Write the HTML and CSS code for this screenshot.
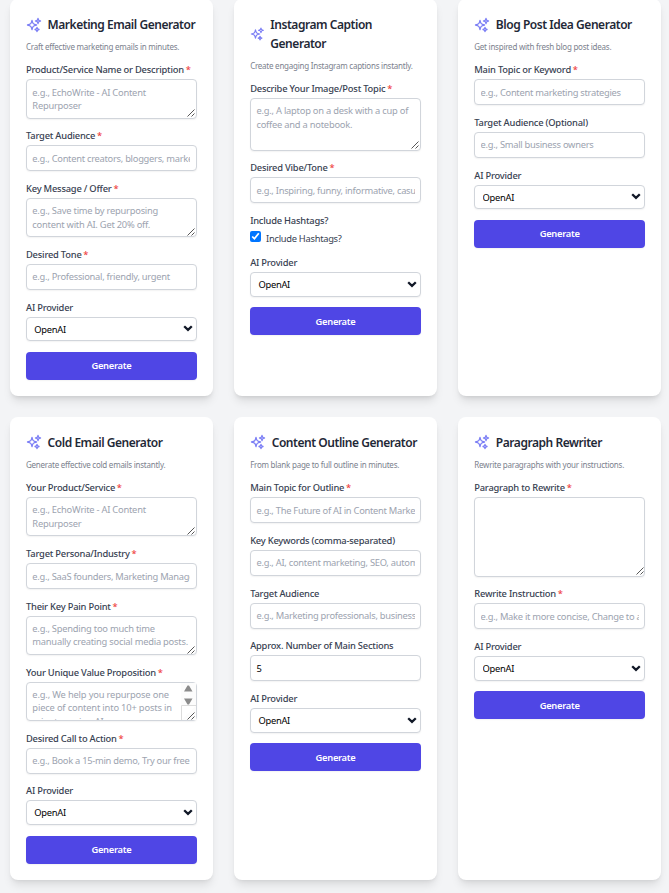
FILE: index.html
```html
<!DOCTYPE html>
<html lang="en">
<head>
<meta charset="utf-8">
<title>AI Content Generators</title>
<link rel="stylesheet" href="styles.css">
</head>
<body>
<svg class="defs" aria-hidden="true">
  <symbol id="sparkles" viewBox="0 0 24 24"><path d="M9.813 15.904 9 18.75l-.813-2.846a4.5 4.5 0 0 0-3.09-3.09L2.25 12l2.846-.813a4.5 4.5 0 0 0 3.09-3.09L9 5.25l.813 2.846a4.5 4.5 0 0 0 3.09 3.09L15.75 12l-2.846.813a4.5 4.5 0 0 0-3.09 3.09ZM18.259 8.715 18 9.75l-.259-1.035a3.375 3.375 0 0 0-2.455-2.456L14.25 6l1.036-.259a3.375 3.375 0 0 0 2.455-2.456L18 2.25l.259 1.035a3.375 3.375 0 0 0 2.456 2.456L21.75 6l-1.035.259a3.375 3.375 0 0 0-2.456 2.456ZM16.894 20.567 16.5 21.75l-.394-1.183a2.25 2.25 0 0 0-1.423-1.423L13.5 18.75l1.183-.394a2.25 2.25 0 0 0 1.423-1.423l.394-1.183.394 1.183a2.25 2.25 0 0 0 1.423 1.423l1.183.394-1.183.394a2.25 2.25 0 0 0-1.423 1.423Z"/></symbol>
  <symbol id="grip" viewBox="0 0 8 8"><path d="M.5 7.5l7-7M4.5 7.5l3-3"/></symbol>
  <symbol id="chevron" viewBox="0 0 10 7"><path d="M1.2 1.2L5 4.9l3.8-3.7"/></symbol>
</svg>
<main class="grid">
  <section class="card">
    <header class="head"><svg class="spark"><use href="#sparkles"/></svg><h2>Marketing Email Generator</h2></header>
    <p class="desc">Craft effective marketing emails in minutes.</p>
    <form class="form">
      <div class="field"><label>Product/Service Name or Description <b>*</b></label><div class="area"><textarea class="control" placeholder="e.g., EchoWrite - AI Content&#10;Repurposer"></textarea><svg class="grip"><use href="#grip"/></svg></div></div>
      <div class="field"><label>Target Audience <b>*</b></label><input class="control" placeholder="e.g., Content creators, bloggers, marketers"></div>
      <div class="field"><label>Key Message / Offer <b>*</b></label><div class="area"><textarea class="control" placeholder="e.g., Save time by repurposing&#10;content with AI. Get 20% off."></textarea><svg class="grip"><use href="#grip"/></svg></div></div>
      <div class="field"><label>Desired Tone <b>*</b></label><input class="control" placeholder="e.g., Professional, friendly, urgent"></div>
      <div class="field"><label>AI Provider</label><div class="area"><select class="control"><option>OpenAI</option></select><svg class="chevron"><use href="#chevron"/></svg></div></div>
      <button type="button">Generate</button>
    </form>
  </section>
  <section class="card">
    <header class="head"><svg class="spark small"><use href="#sparkles"/></svg><h2>Instagram Caption<br>Generator</h2></header>
    <p class="desc">Create engaging Instagram captions instantly.</p>
    <form class="form">
      <div class="field"><label>Describe Your Image/Post Topic <b>*</b></label><div class="area"><textarea class="control rows3" placeholder="e.g., A laptop on a desk with a cup of&#10;coffee and a notebook."></textarea><svg class="grip"><use href="#grip"/></svg></div></div>
      <div class="field"><label>Desired Vibe/Tone <b>*</b></label><input class="control" placeholder="e.g., Inspiring, funny, informative, casual"></div>
      <div class="field"><label>Include Hashtags?</label><div class="check"><input type="checkbox" checked><span>Include Hashtags?</span></div></div>
      <div class="field"><label>AI Provider</label><div class="area"><select class="control"><option>OpenAI</option></select><svg class="chevron"><use href="#chevron"/></svg></div></div>
      <button type="button">Generate</button>
    </form>
  </section>
  <section class="card">
    <header class="head"><svg class="spark"><use href="#sparkles"/></svg><h2>Blog Post Idea Generator</h2></header>
    <p class="desc">Get inspired with fresh blog post ideas.</p>
    <form class="form">
      <div class="field"><label>Main Topic or Keyword <b>*</b></label><input class="control" placeholder="e.g., Content marketing strategies"></div>
      <div class="field"><label>Target Audience (Optional)</label><input class="control" placeholder="e.g., Small business owners"></div>
      <div class="field"><label>AI Provider</label><div class="area"><select class="control"><option>OpenAI</option></select><svg class="chevron"><use href="#chevron"/></svg></div></div>
      <button type="button">Generate</button>
    </form>
  </section>
  <section class="card">
    <header class="head"><svg class="spark"><use href="#sparkles"/></svg><h2>Cold Email Generator</h2></header>
    <p class="desc">Generate effective cold emails instantly.</p>
    <form class="form">
      <div class="field"><label>Your Product/Service <b>*</b></label><div class="area"><textarea class="control" placeholder="e.g., EchoWrite - AI Content&#10;Repurposer"></textarea><svg class="grip"><use href="#grip"/></svg></div></div>
      <div class="field"><label>Target Persona/Industry <b>*</b></label><input class="control" placeholder="e.g., SaaS founders, Marketing Managers"></div>
      <div class="field"><label>Their Key Pain Point <b>*</b></label><div class="area"><textarea class="control" placeholder="e.g., Spending too much time&#10;manually creating social media posts."></textarea><svg class="grip"><use href="#grip"/></svg></div></div>
      <div class="field"><label>Your Unique Value Proposition <b>*</b></label><div class="area"><textarea class="control scrolls" placeholder="e.g., We help you repurpose one&#10;piece of content into 10+ posts in&#10;minutes using AI."></textarea><svg class="scrollbar" viewBox="0 0 15 37"><path class="track" d="M0 0h15v37H0z"/><path class="arrow" d="M3 8.5L6.5 2.5h1.5L11.5 8.5zM3 15.5h8.5L8 21.5h-1.5z"/><path class="corner" d="M.5 37V22.5H15"/></svg><svg class="grip"><use href="#grip"/></svg></div></div>
      <div class="field"><label>Desired Call to Action <b>*</b></label><input class="control" placeholder="e.g., Book a 15-min demo, Try our free trial"></div>
      <div class="field"><label>AI Provider</label><div class="area"><select class="control"><option>OpenAI</option></select><svg class="chevron"><use href="#chevron"/></svg></div></div>
      <button type="button">Generate</button>
    </form>
  </section>
  <section class="card">
    <header class="head"><svg class="spark"><use href="#sparkles"/></svg><h2>Content Outline Generator</h2></header>
    <p class="desc">From blank page to full outline in minutes.</p>
    <form class="form">
      <div class="field"><label>Main Topic for Outline <b>*</b></label><input class="control" placeholder="e.g., The Future of AI in Content Marketing"></div>
      <div class="field"><label>Key Keywords (comma-separated)</label><input class="control" placeholder="e.g., AI, content marketing, SEO, automation"></div>
      <div class="field"><label>Target Audience</label><input class="control" placeholder="e.g., Marketing professionals, business owners"></div>
      <div class="field"><label>Approx. Number of Main Sections</label><input class="control" value="5"></div>
      <div class="field"><label>AI Provider</label><div class="area"><select class="control"><option>OpenAI</option></select><svg class="chevron"><use href="#chevron"/></svg></div></div>
      <button type="button">Generate</button>
    </form>
  </section>
  <section class="card">
    <header class="head"><svg class="spark"><use href="#sparkles"/></svg><h2>Paragraph Rewriter</h2></header>
    <p class="desc">Rewrite paragraphs with your instructions.</p>
    <form class="form">
      <div class="field"><label>Paragraph to Rewrite <b>*</b></label><div class="area"><textarea class="control rows5"></textarea><svg class="grip"><use href="#grip"/></svg></div></div>
      <div class="field"><label>Rewrite Instruction <b>*</b></label><input class="control" placeholder="e.g., Make it more concise, Change to a formal tone"></div>
      <div class="field"><label>AI Provider</label><div class="area"><select class="control"><option>OpenAI</option></select><svg class="chevron"><use href="#chevron"/></svg></div></div>
      <button type="button">Generate</button>
    </form>
  </section>
</main>
</body>
</html>
```
FILE: styles.css
```css
* { box-sizing: border-box; }
html { overflow: hidden; }
body {
  margin: 0;
  height: 893px;
  overflow: hidden;
  background: #f3f4f6;
  font-family: "Noto Sans", "Open Sans", sans-serif;
  color: #1f2937;
}
.defs { position: absolute; width: 0; height: 0; }
.grid {
  display: grid;
  grid-template-columns: repeat(3, 202.8px);
  gap: 21.33px;
  margin: -0.8px 0 0 10px;
}
.card {
  padding: 16px;
  background: #fff;
  border-radius: 8px;
  box-shadow: 0 6.67px 10px -2px rgb(0 0 0 / .1), 0 2.67px 4px -2.67px rgb(0 0 0 / .1);
}
.head { display: flex; align-items: center; margin-bottom: 8px; }
.spark {
  flex: none;
  width: 16px;
  height: 16px;
  margin-right: 5.6px;
  fill: none;
  stroke: #7c7ff5;
  stroke-width: 2;
  stroke-linecap: round;
  stroke-linejoin: round;
}
.spark.small { width: 14.6px; }
h2 {
  margin: 1px 0 -1px;
  font-size: 12px;
  line-height: 18.67px;
  font-weight: 600;
  letter-spacing: -.46px;
  white-space: nowrap;
}
.desc {
  margin: 0 0 10.67px;
  font-size: 8px;
  line-height: 10.67px;
  color: #7b818d;
  letter-spacing: -.24px;
  white-space: nowrap;
}
.form { display: flex; flex-direction: column; gap: 10.67px; }
.field { display: flex; flex-direction: column; gap: 2.67px; }
label {
  font-size: 9.33px;
  line-height: 13.33px;
  font-weight: 500;
  color: #374151;
  letter-spacing: -.21px;
  white-space: nowrap;
}
label b { font-weight: 500; color: #ef4444; margin-left: -.4px; }
.area { position: relative; display: flex; }
.control {
  display: block;
  width: 100%;
  height: 26.05px;
  margin: 0;
  padding: 5.33px;
  border: 1px solid #d1d5db;
  border-radius: 4px;
  background: #fff;
  box-shadow: 0 1px 1.5px rgb(0 0 0 / .05);
  font: 400 9.33px/13.33px "Noto Sans", "Open Sans", sans-serif;
  letter-spacing: -.27px;
  color: #000;
  outline: 0;
}
.control::placeholder { color: #9ca3af; opacity: 1; }
textarea.control { height: 39.33px; padding-right: 0; resize: none; overflow: hidden; letter-spacing: -.23px; }
textarea.rows3 { height: 52.67px; }
textarea.rows5 { height: 79.6px; }
textarea.scrolls { padding-right: 16px; letter-spacing: -.17px; }
select.control { height: 24.67px; padding: 5px 7.3px 4.3px; appearance: none; }
.grip {
  position: absolute;
  right: 1.5px;
  bottom: 1.5px;
  width: 8px;
  height: 8px;
  stroke: #444;
  stroke-width: .9;
}
.chevron {
  position: absolute;
  right: 4px;
  top: 8.7px;
  width: 10px;
  height: 7px;
  fill: none;
  stroke: #111827;
  stroke-width: 2.3;
}
.scrollbar { position: absolute; right: 1px; top: 1px; width: 15px; height: 37px; }
.track { fill: #fcfcfc; }
.arrow { fill: #8b8b8b; }
.corner { fill: #fff; stroke: #dcdcdc; }
.check { display: flex; align-items: flex-start; height: 15.5px; }
.check input { width: 10.67px; height: 10.67px; margin: 1.4px 5.33px 0 0; accent-color: #0075ff; }
.check span { font-size: 9.33px; line-height: 13.33px; padding-top: 2px; letter-spacing: -.28px; color: #374151; }
button {
  height: 28px;
  padding: 0;
  border: 0;
  border-radius: 4px;
  background: #4f46e5;
  color: #fff;
  font: 600 9.33px/13.33px "Noto Sans", "Open Sans", sans-serif;
  letter-spacing: -.3px;
  box-shadow: 0 1px 1.5px rgb(0 0 0 / .05);
}
```
